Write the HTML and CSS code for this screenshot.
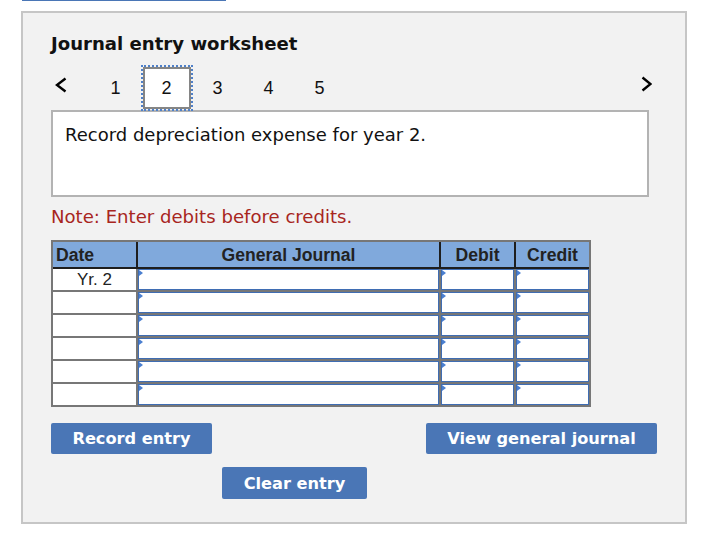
FILE: index.html
```html
<!DOCTYPE html>
<html lang="en">
<head>
<meta charset="utf-8">
<title>Journal entry worksheet</title>
<link rel="stylesheet" href="styles.css">
</head>
<body>
<div class="tabbar"></div>
<div class="panel">
  <h1 class="title">Journal entry worksheet</h1>
  <div class="nav">
    <svg class="chev chev-left" width="12" height="16" viewBox="0 0 12 16"><polyline points="10.5,1.5 2,8 10.5,14.5" fill="none" stroke="#000" stroke-width="2.4"/></svg>
    <span class="step">1</span>
    <span class="step"><span class="step-box">2</span></span>
    <span class="step">3</span>
    <span class="step">4</span>
    <span class="step">5</span>
    <svg class="chev chev-right" width="11" height="16" viewBox="0 0 11 16"><polyline points="1.5,1.5 9.5,8 1.5,14.5" fill="none" stroke="#000" stroke-width="2.4"/></svg>
  </div>
  <div class="question">Record depreciation expense for year 2.</div>
  <p class="note">Note: Enter debits before credits.</p>
  <div class="journal">
    <div class="jhead">
      <div class="h-date">Date</div>
      <div class="h-center">General Journal</div>
      <div class="h-center">Debit</div>
      <div class="h-center">Credit</div>
    </div>
    <div class="jbody">
      <div class="jrow"><div class="c-date">Yr. 2</div><div class="c-in"><input type="text"></div><div class="c-in"><input type="text"></div><div class="c-in"><input type="text"></div></div>
      <div class="jrow"><div class="c-date"></div><div class="c-in"><input type="text"></div><div class="c-in"><input type="text"></div><div class="c-in"><input type="text"></div></div>
      <div class="jrow"><div class="c-date"></div><div class="c-in"><input type="text"></div><div class="c-in"><input type="text"></div><div class="c-in"><input type="text"></div></div>
      <div class="jrow"><div class="c-date"></div><div class="c-in"><input type="text"></div><div class="c-in"><input type="text"></div><div class="c-in"><input type="text"></div></div>
      <div class="jrow"><div class="c-date"></div><div class="c-in"><input type="text"></div><div class="c-in"><input type="text"></div><div class="c-in"><input type="text"></div></div>
      <div class="jrow"><div class="c-date"></div><div class="c-in"><input type="text"></div><div class="c-in"><input type="text"></div><div class="c-in"><input type="text"></div></div>
    </div>
  </div>
  <div class="actions">
    <button class="btn btn-record">Record entry</button>
    <button class="btn btn-view">View general journal</button>
  </div>
  <button class="btn btn-clear">Clear entry</button>
</div>
</body>
</html>
```
FILE: styles.css
```css
html, body {
  margin: 0;
  padding: 0;
  background: #ffffff;
}
body {
  font-family: "DejaVu Sans", Verdana, sans-serif;
  color: #000;
}
.tabbar {
  margin-left: 22px;
  width: 204px;
  height: 1px;
  background: #4a76b6;
}
.panel {
  margin: 10px 0 0 21px;
  width: 666px;
  height: 513px;
  box-sizing: border-box;
  border: 2px solid #c6c6c6;
  background: #f2f2f2;
  padding: 20px 28px 23px 28px;
}
.title {
  margin: 0;
  font-size: 18.1px;
  line-height: 22px;
  font-weight: bold;
  color: #111;
}
.nav {
  margin-top: 10px;
  width: 601px;
  height: 46px;
  display: flex;
  align-items: center;
  font-family: "Liberation Sans", Arial, sans-serif;
  font-size: 18px;
  color: #111;
}
.chev {
  display: block;
  align-self: flex-start;
}
.chev-left {
  margin: 12px 23px 0 4px;
}
.chev-right {
  margin: 11px 0 0 auto;
}
.step {
  width: 51px;
  height: 46px;
  display: flex;
  align-items: center;
  justify-content: center;
}
.step-box {
  width: 48px;
  height: 42px;
  box-sizing: border-box;
  border: 2px solid #858585;
  outline: 2px dotted #4f80c8;
  background: #fff;
  display: flex;
  align-items: center;
  justify-content: center;
  position: relative;
  z-index: 1;
}
.question {
  margin-top: -1px;
  width: 598px;
  height: 87px;
  box-sizing: border-box;
  border: 2px solid #b3b3b3;
  background: #fff;
  padding: 12px 12px;
  font-size: 18px;
  line-height: 22px;
  color: #111;
}
.note {
  margin: 9px 0 0 0;
  font-size: 18.1px;
  line-height: 22px;
  color: #a8261e;
}
.journal {
  margin-top: 12px;
  width: 540px;
  box-sizing: border-box;
  border: 2px solid #777;
  background: #777;
  font-family: "Liberation Sans", Arial, sans-serif;
  color: #222;
}
.jhead,
.jrow {
  display: grid;
  grid-template-columns: 83px 301px 73px 73px;
  column-gap: 2px;
}
.jhead {
  background: #1e1e1e;
  padding-bottom: 2px;
}
.jhead > div {
  background: #80a9dc;
  height: 25px;
  line-height: 26px;
  font-weight: bold;
  font-size: 17.6px;
}
.h-date {
  padding-left: 3px;
}
.h-center {
  text-align: center;
}
.jbody {
  display: grid;
  row-gap: 2px;
}
.jrow > div {
  height: 21px;
  background: #fff;
}
.c-date {
  text-align: center;
  font-size: 17px;
  line-height: 21px;
}
.c-in {
  position: relative;
}
.c-in input {
  display: block;
  width: 100%;
  height: 21px;
  box-sizing: border-box;
  margin: 0;
  padding: 0 4px;
  border: 1px solid #3f6db3;
  background: #fff;
  outline: none;
}
.c-in::before {
  content: "";
  position: absolute;
  left: 1px;
  top: 1px;
  width: 0;
  height: 0;
  border-left: 4px solid #4a7fd0;
  border-top: 3px solid transparent;
  border-bottom: 3px solid transparent;
}
.actions {
  margin-top: 16px;
  display: flex;
  justify-content: space-between;
}
.btn {
  display: block;
  margin: 0;
  padding: 0;
  border: none;
  border-radius: 2px;
  background: #4a76b6;
  color: #fff;
  font-family: "DejaVu Sans", Verdana, sans-serif;
  font-weight: bold;
  font-size: 16.2px;
  text-align: center;
}
.btn-record {
  width: 161px;
  height: 31px;
  line-height: 32px;
}
.btn-view {
  width: 231px;
  height: 31px;
  line-height: 32px;
}
.btn-clear {
  margin: 13px 0 0 171px;
  width: 145px;
  height: 32px;
  line-height: 33px;
}
```
